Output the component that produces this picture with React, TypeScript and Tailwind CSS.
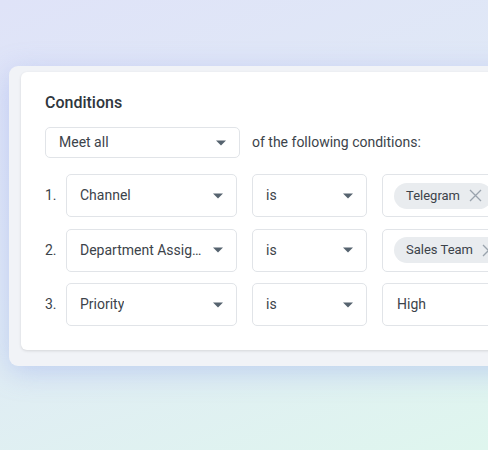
import React from 'react';

const Caret = () => (
  <svg width="10" height="6" viewBox="0 0 10 6" className="shrink-0">
    <path d="M0 0.5h10L5 5.5z" fill="#56636f" />
  </svg>
);

const XIcon = () => (
  <svg width="13" height="13" viewBox="0 0 13 13" className="shrink-0">
    <path d="M1 1l11 11M12 1L1 12" stroke="#9aa3ad" strokeWidth="1.3" fill="none" />
  </svg>
);

const Select = ({ label, width }: { label: string; width: string }) => (
  <div className={`${width} h-[43px] shrink-0 flex items-center justify-between pl-[13px] pr-[13px] bg-white border border-[#e1e4e8] rounded-[5px]`}>
    <span className="text-[14px] text-[#3c434a] truncate">{label}</span>
    <Caret />
  </div>
);

const Chip = ({ label }: { label: string }) => (
  <div className="h-[26px] flex items-center gap-[9px] pl-[12px] pr-[10px] rounded-full bg-[#e9ecef] shrink-0">
    <span className="text-[13px] text-[#3c434a]">{label}</span>
    <XIcon />
  </div>
);

const rows = [
  { n: '1.', field: 'Channel', value: <Chip label="Telegram" /> },
  { n: '2.', field: 'Department Assig…', value: <Chip label="Sales Team" /> },
  { n: '3.', field: 'Priority', value: <span className="ml-[3px] text-[14px] text-[#3c434a]">High</span> },
];

export default function App() {
  return (
    <div
      className="w-[488px] h-[450px] overflow-hidden bg-[linear-gradient(160deg,#dfe3f8_0%,#e0e9f6_45%,#dff6ee_100%)]"
      style={{ fontFamily: 'Roboto, "Noto Sans", Arial, sans-serif' }}
    >
      <div className="mt-[66px] ml-[9px] w-[540px] pl-[12px] pt-[6px] pb-[16px] rounded-l-[9px] bg-[#f1f3f7] shadow-[0_6px_28px_rgba(130,150,235,0.35)]">
        <div className="w-[520px] bg-white rounded-l-[6px] shadow-[0_1px_3px_rgba(0,0,0,0.12)] pl-[24px] pt-[21px] pb-[24px]">
          <h2 className="text-[16px] font-medium text-[#2f363d] leading-[20px]">Conditions</h2>
          <div className="mt-[14px] flex items-center gap-[12px]">
            <div className="w-[195px] h-[31px] flex items-center justify-between pl-[13px] pr-[13px] border border-[#e1e4e8] rounded-[5px]">
              <span className="text-[14px] text-[#3c434a]">Meet all</span>
              <Caret />
            </div>
            <span className="text-[14px] text-[#3c434a]">of the following conditions:</span>
          </div>
          <div className="mt-[16px] flex flex-col gap-[11.5px]">
            {rows.map((r) => (
              <div key={r.n} className="flex items-center">
                <span className="w-[21px] shrink-0 text-[14px] text-[#3c434a]">{r.n}</span>
                <Select label={r.field} width="w-[171px]" />
                <div className="ml-[15px]">
                  <Select label="is" width="w-[115px]" />
                </div>
                <div className="ml-[15px] w-[200px] h-[43px] flex items-center pl-[11px] border border-[#e1e4e8] rounded-[5px]">
                  {r.value}
                </div>
              </div>
            ))}
          </div>
        </div>
      </div>
    </div>
  );
}
